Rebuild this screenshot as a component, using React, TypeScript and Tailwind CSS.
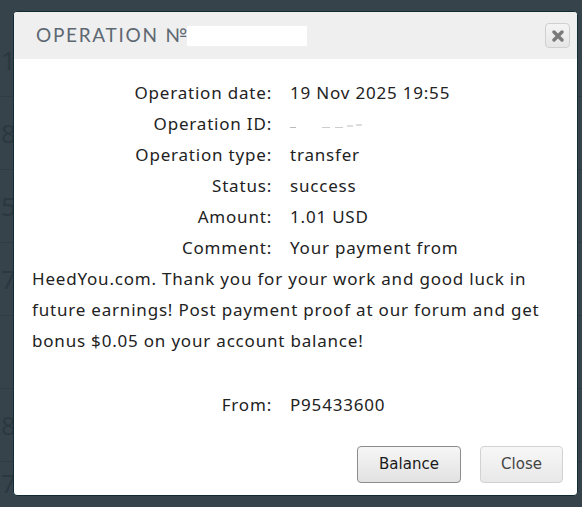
const rows = [
  { label: "Operation date:", value: "19 Nov 2025 19:55" },
  { label: "Operation ID:", value: "" },
  { label: "Operation type:", value: "transfer" },
  { label: "Status:", value: "success" },
  { label: "Amount:", value: "1.01 USD" },
];

const bgDigits = ["1", "8", "5", "7", "", "8"];

function CloseIcon() {
  return (
    <svg width="12" height="12" viewBox="0 0 12 12">
      <path d="M2 2 L10 10 M10 2 L2 10" stroke="#7a7a7a" strokeWidth="3.4" strokeLinecap="round" />
    </svg>
  );
}

function Redacted() {
  return (
    <span className="relative inline-block w-[80px] h-[31px] align-top">
      <span className="absolute left-0 top-[19px] w-[6px] h-[1px] bg-[#bbb]" />
      <span className="absolute left-[32px] top-[19px] w-[8px] h-[1px] bg-[#ccc]" />
      <span className="absolute left-[45px] top-[19px] w-[8px] h-[1px] bg-[#ccc]" />
      <span className="absolute left-[57px] top-[17px] w-[6px] h-[2px] bg-[#ddd]" />
      <span className="absolute left-[66px] top-[16px] w-[6px] h-[2px] bg-[#ddd]" />
    </span>
  );
}

export default function App() {
  return (
    <div className="relative w-[582px] h-[507px] overflow-hidden bg-[#36434b] font-['Noto_Sans',sans-serif]">
      {/* page behind the overlay */}
      <div className="pt-[24px] pl-[1px]">
        {bgDigits.map((d, i) => (
          <div key={i} className="h-[73px] border-b border-[#2f3c44] flex items-center text-[26px] text-[#2c383f]">
            <span>{d}</span>
          </div>
        ))}
        <div className="text-[26px] text-[#2c383f] mt-[2px]">7 USD</div>
      </div>

      {/* modal */}
      <div className="absolute left-[13px] top-[11px] w-[565px] h-[485px] bg-white rounded-[4px] border border-[#0f2c35] flex flex-col overflow-hidden">
        <div className="h-[47px] shrink-0 bg-[#efefef] flex items-center justify-between pl-[22px] pr-[7px]">
          <div className="flex items-center font-['Lato',sans-serif] text-[19px] tracking-[0.09em] text-[#5d6872] uppercase">
            <span>Operation №</span>
            <span className="inline-block w-[120px] h-[20px] bg-white -ml-[2px]" />
          </div>
          <button className="w-[25px] h-[25px] rounded-[4px] border border-[#d0d0d0] bg-gradient-to-b from-[#f4f4f4] to-[#e6e6e6] flex items-center justify-center">
            <CloseIcon />
          </button>
        </div>

        <div className="flex-1 pl-[18px] pr-[20px] pt-[18px] text-[17px] leading-[31px] tracking-[0.8px] text-[#222]">
          {rows.map((r) => (
            <div key={r.label} className="flex h-[31px]">
              <span className="w-[240px] text-right shrink-0">{r.label}</span>
              <span className="ml-[18px]">{r.value || <Redacted />}</span>
            </div>
          ))}
          <p>
            <span className="inline-block w-[240px] text-right">Comment:</span>
            <span className="ml-[18px]">
              Your payment from HeedYou.com. Thank you for your work and good luck in future earnings! Post payment proof at our forum and get bonus $0.05 on your account balance!
            </span>
          </p>
          <div className="flex h-[31px] mt-[33px]">
            <span className="w-[240px] text-right shrink-0">From:</span>
            <span className="ml-[18px]">P95433600</span>
          </div>
        </div>

        <div className="flex justify-end gap-[19px] pr-[14px] pb-[12px] font-['DejaVu_Sans',sans-serif] text-[15px]">
          <button className="w-[104px] h-[37px] rounded-[4px] border border-[#8c8c8c] bg-gradient-to-b from-[#f6f6f6] to-[#e2e2e2] text-[#1a1a1a]">
            Balance
          </button>
          <button className="w-[83px] h-[37px] rounded-[4px] border border-[#d2d2d2] bg-gradient-to-b from-[#f7f7f7] to-[#e8e8e8] text-[#444]">
            Close
          </button>
        </div>
      </div>
    </div>
  );
}
